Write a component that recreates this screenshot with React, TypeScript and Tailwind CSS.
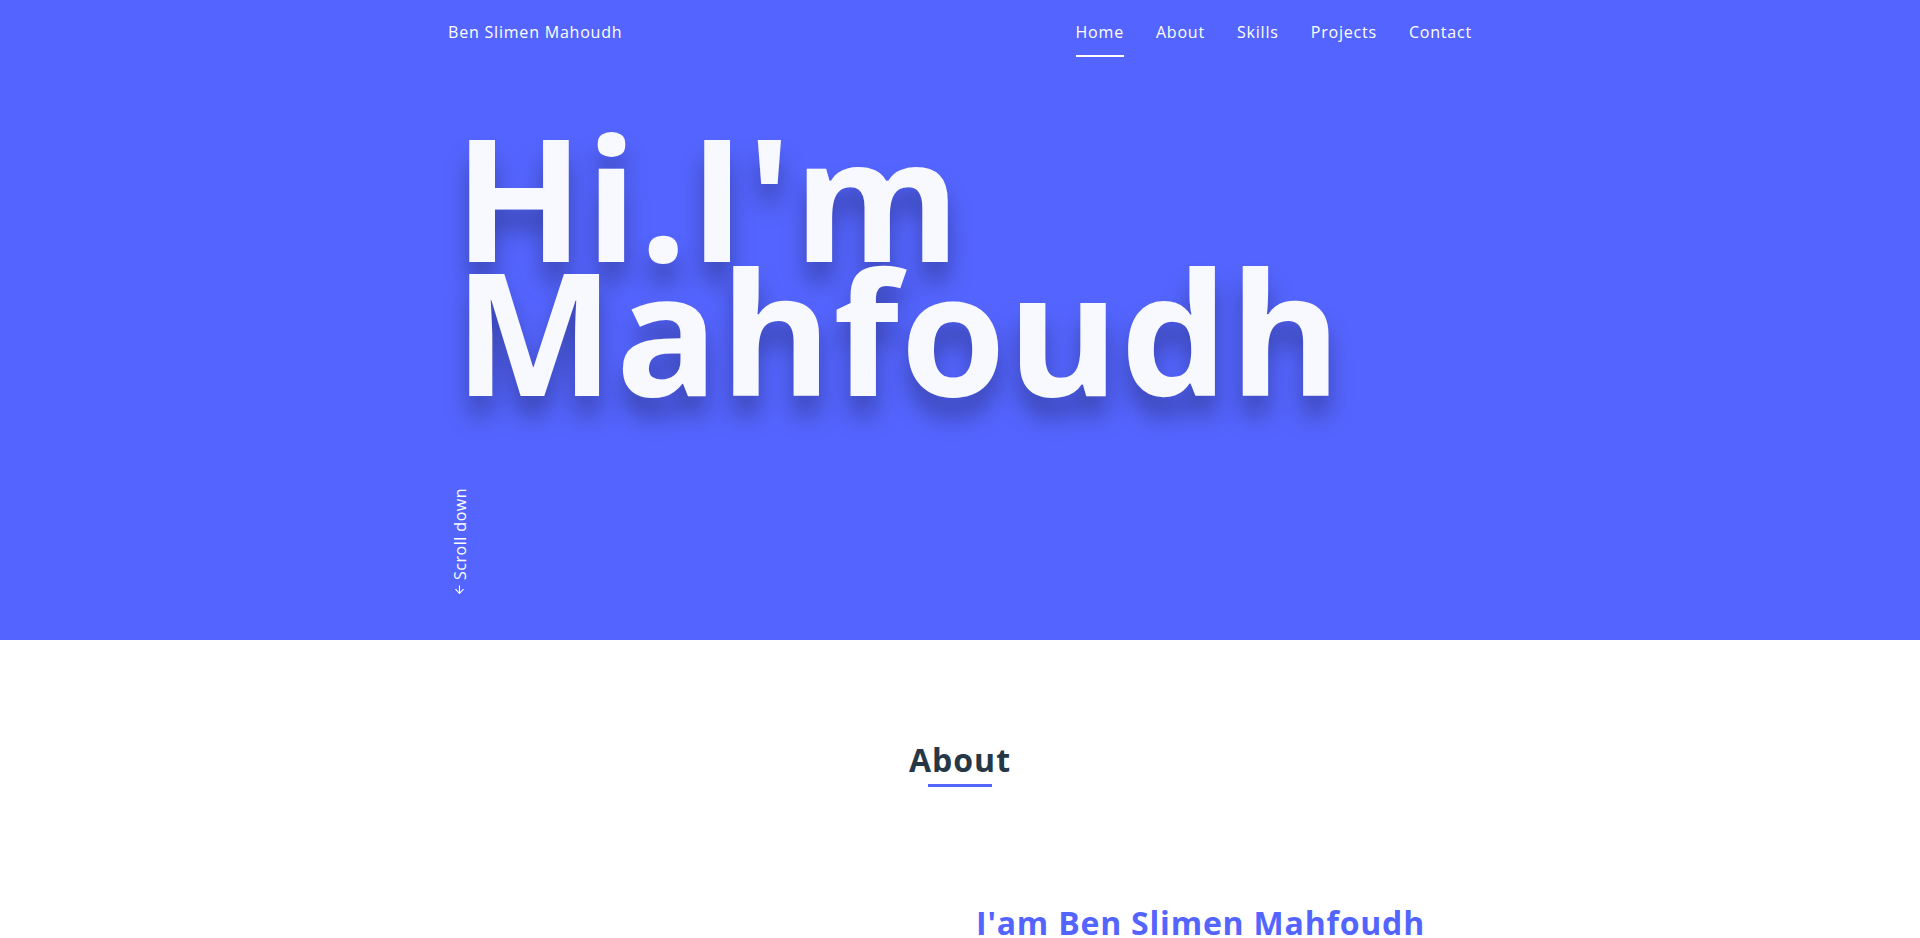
import React from "react";
import { ArrowUp } from "lucide-react";

const links = ["Home", "About", "Skills", "Projects", "Contact"];

const Nav = () => {
	return (
		<nav className="w-[1024px] mx-auto flex justify-between items-center h-[64px] text-[16px] tracking-[0.8px] text-white">
			<a>Ben Slimen Mahoudh</a>
			<ul className="flex items-center gap-[32px]">
				{links.map((l, i) => (
					<li key={l} className="relative h-[64px] flex items-center">
						<a>{l}</a>
						{i === 0 && (
							<span className="absolute left-0 right-0 top-[55px] h-[2px] bg-white" />
						)}
					</li>
				))}
			</ul>
		</nav>
	);
};

export default function App() {
	return (
		<div className="w-full font-['Open_Sans',sans-serif]">
			{/* Hero */}
			<header className="bg-[#5465ff] h-[640px]">
				<Nav />
				<div className="w-[1024px] mx-auto">
					<h1 className="mt-[65px] pl-[6px] text-[170px] leading-[134px] font-bold tracking-[1.5px] text-[#f8f8ff] [text-shadow:0_20px_24px_rgba(0,0,0,0.3)]">
						Hi.I'm
						<br />
						Mahfoudh
					</h1>
					<div className="mt-[91px] pl-[7px] flex items-center gap-[3px] text-[16px] tracking-[0.5px] text-white [writing-mode:vertical-rl] rotate-180">
						<ArrowUp size={13} strokeWidth={2} />
						<span>Scroll down</span>
					</div>
				</div>
			</header>

			{/* About */}
			<section className="bg-white">
				<div className="w-[1024px] mx-auto pt-[96px]">
					<div className="flex flex-col items-center">
						<h2 className="text-[32px] leading-[48px] font-bold tracking-[1px] text-[#263746]">About</h2>
						<span className="w-[64px] h-[3px] bg-[#5465ff]" />
					</div>
					<div className="grid grid-cols-2 mt-[112px]">
						<div />
						<div className="pl-[16px]">
							<h3 className="text-[32px] leading-[48px] font-bold tracking-[0.8px] text-[#5465ff]">
								I'am Ben Slimen Mahfoudh
							</h3>
						</div>
					</div>
				</div>
			</section>
		</div>
	);
}
